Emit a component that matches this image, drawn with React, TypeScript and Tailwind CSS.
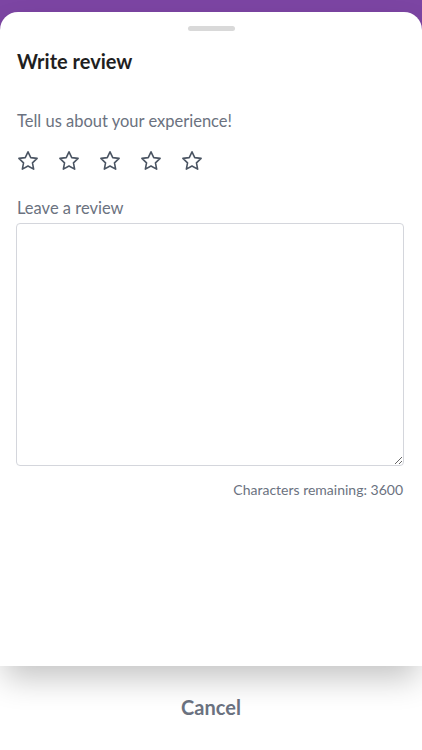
import React from "react";

function StarIcon() {
  return (
    <svg width="24" height="24" viewBox="0 0 24 24" fill="none" stroke="#4b5563" strokeWidth="1.6" strokeLinejoin="round" strokeLinecap="round">
      <path d="M12 2.8l2.75 5.8 6.35.8-4.65 4.4 1.2 6.3L12 17l-5.65 3.1 1.2-6.3L2.9 9.4l6.35-.8L12 2.8z" />
    </svg>
  );
}

export default function App() {
  return (
    <div className="w-[422px] h-[750px] bg-white flex flex-col overflow-hidden" style={{ fontFamily: "Lato, 'Noto Sans', sans-serif" }}>
      <div className="bg-[#7c45a3] pt-[12px]">
        <div className="bg-white rounded-t-[18px] h-[654px] flex flex-col px-[17px] shadow-[0_16px_32px_-4px_rgba(0,0,0,0.24)] relative z-10">
          <div className="flex justify-center pt-[14px]">
            <div className="w-[47px] h-[5px] rounded-full bg-[#d9d9d9]" />
          </div>
          <h1 className="mt-[18px] text-[20px] leading-[24px] font-bold text-[#1f1f1f]">Write review</h1>
          <p className="mt-[38px] text-[16.5px] leading-[20px] text-[#6b7280]">Tell us about your experience!</p>
          <div className="mt-[18px] flex gap-[17px] -ml-[1px]">
            <StarIcon />
            <StarIcon />
            <StarIcon />
            <StarIcon />
            <StarIcon />
          </div>
          <p className="mt-[25px] text-[16.5px] leading-[20px] text-[#6b7280]">Leave a review</p>
          <textarea className="mt-[5px] -ml-[1px] w-[388px] h-[243px] border border-[#d4d6dc] rounded-[4px] outline-none" />
          <p className="mt-[15px] text-right text-[14px] leading-[18px] text-[#6b7280] pr-[2px]">Characters remaining: 3600</p>
        </div>
      </div>
      <div className="flex justify-center pt-[29px]">
        <span className="text-[20px] leading-[24px] font-bold text-[#6b7280]">Cancel</span>
      </div>
    </div>
  );
}
